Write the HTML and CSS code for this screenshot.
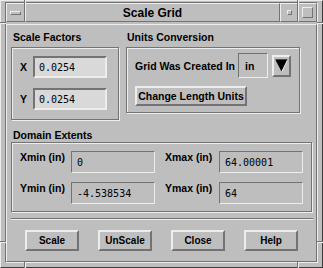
FILE: index.html
```html
<!DOCTYPE html>
<html lang="en">
<head>
    <meta charset="UTF-8" />
    <title>Scale Grid</title>
    <link rel="stylesheet" href="styles.css">
</head>
<body>
    <div class="frame">
        <span class="mark mark-v" style="left: 23px; top: -1px;"></span>
        <span class="mark mark-v" style="left: 296px; top: -1px;"></span>
        <span class="mark mark-v" style="left: 23px; top: 261px;"></span>
        <span class="mark mark-v" style="left: 296px; top: 261px;"></span>
        <span class="mark mark-h" style="left: -1px; top: 21px;"></span>
        <span class="mark mark-h" style="left: 316px; top: 21px;"></span>
        <span class="mark mark-h" style="left: -1px; top: 240px;"></span>
        <span class="mark mark-h" style="left: 316px; top: 240px;"></span>

        <div class="frame-inner">
            <div class="titlebar">
                <div class="tb-btn tb-menu"><span class="glyph-menu"></span></div>
                <div class="tb-title">Scale Grid</div>
                <div class="tb-btn tb-min"><span class="glyph-min"></span></div>
                <div class="tb-btn tb-max"><span class="glyph-max"></span></div>
            </div>

            <div class="client">
                <div class="top-row">
                    <div class="group scale-group">
                        <div class="group-label">Scale Factors</div>
                        <div class="group-box scale-box">
                            <div class="axis-row">
                                <span class="axis">X</span>
                                <div class="field field-edit">0.0254</div>
                            </div>
                            <div class="axis-row">
                                <span class="axis">Y</span>
                                <div class="field field-edit">0.0254</div>
                            </div>
                        </div>
                    </div>

                    <div class="group units-group">
                        <div class="group-label">Units Conversion</div>
                        <div class="group-box units-box">
                            <div class="units-row">
                                <span class="label">Grid Was Created In</span>
                                <div class="option-value">in</div>
                                <div class="arrow-btn">
                                    <svg width="13" height="13" viewBox="0 0 13 13">
                                        <polygon points="0.5,1 12.5,1 6.5,12.5" fill="#000" />
                                        <line x1="12.5" y1="1" x2="7" y2="12.5" stroke="#ededed" stroke-width="1" />
                                        <line x1="0.5" y1="0.5" x2="12.5" y2="0.5" stroke="#4a4a4a" stroke-width="1" />
                                    </svg>
                                </div>
                            </div>
                            <button class="btn btn-change">Change Length Units</button>
                        </div>
                    </div>
                </div>

                <div class="group-label domain-label">Domain Extents</div>
                <div class="group-box domain-box">
                    <span class="label">Xmin (in)</span>
                    <div class="field">0</div>
                    <span class="label label-right">Xmax (in)</span>
                    <div class="field">64.00001</div>
                    <span class="label">Ymin (in)</span>
                    <div class="field">-4.538534</div>
                    <span class="label label-right">Ymax (in)</span>
                    <div class="field">64</div>
                </div>

                <div class="separator"></div>

                <div class="action-row">
                    <button class="btn btn-action">Scale</button>
                    <button class="btn btn-action">UnScale</button>
                    <button class="btn btn-action">Close</button>
                    <button class="btn btn-action">Help</button>
                </div>
            </div>
        </div>
    </div>
</body>
</html>
```

FILE: styles.css
```css
* {
    box-sizing: border-box;
}

body {
    margin: 0;
    background: #bebebe;
    font-family: "Liberation Sans", Arial, sans-serif;
    color: #000;
}

.frame {
    position: relative;
    width: 323px;
    height: 268px;
    background: #bebebe;
    border: 1px solid;
    border-color: #ededed #3c3c3c #3c3c3c #ededed;
    padding: 1px 4px 4px 4px;
}

.frame-inner {
    height: 100%;
    border: 1px solid;
    border-color: #737373 #ededed #ededed #737373;
    display: flex;
    flex-direction: column;
}

/* window manager corner marks */
.mark {
    position: absolute;
    display: block;
}

.mark-v {
    width: 2px;
    height: 6px;
    border-left: 1px solid #737373;
    border-right: 1px solid #ededed;
}

.mark-h {
    width: 6px;
    height: 2px;
    border-top: 1px solid #737373;
    border-bottom: 1px solid #ededed;
}

.titlebar {
    height: 19px;
    display: flex;
}

.tb-btn,
.tb-title {
    border: 1px solid;
    border-color: #ededed #737373 #737373 #ededed;
    display: flex;
    align-items: center;
    justify-content: center;
}

.tb-menu {
    width: 19px;
}

.tb-min {
    width: 18px;
}

.tb-max {
    width: 19px;
}

.tb-title {
    flex: 1;
    font-size: 12px;
    font-weight: bold;
}

.glyph-menu {
    width: 11px;
    height: 4px;
    border: 1px solid;
    border-color: #ededed #737373 #737373 #ededed;
}

.glyph-min {
    width: 5px;
    height: 5px;
    border: 1px solid;
    border-color: #ededed #737373 #737373 #ededed;
}

.glyph-max {
    width: 11px;
    height: 11px;
    border: 1px solid;
    border-color: #ededed #737373 #737373 #ededed;
}

.client {
    flex: 1;
    margin-top: 2px;
    border: 1px solid;
    border-color: #ededed #737373 #737373 #ededed;
    padding: 6px 4px 0 4px;
}

.top-row {
    display: flex;
    gap: 7px;
    align-items: flex-start;
}

.group-label {
    font-size: 10.5px;
    font-weight: bold;
    line-height: 13px;
    height: 13px;
    padding-left: 2px;
    margin-bottom: 3px;
    white-space: nowrap;
}

.group-box {
    border: 1px solid #737373;
    box-shadow: inset 1px 1px 0 #ededed, 1px 1px 0 #ededed;
}

.scale-group {
    width: 108px;
}

.scale-box {
    height: 73px;
    padding: 8px 0 0 8px;
    display: flex;
    flex-direction: column;
    gap: 10px;
}

.axis-row {
    display: flex;
    align-items: center;
}

.axis {
    width: 13px;
    font-size: 10.5px;
    font-weight: bold;
}

.field {
    height: 22px;
    border: 1px solid;
    border-color: #737373 #ededed #ededed #737373;
    font-family: "DejaVu Sans Mono", monospace;
    font-size: 10px;
    padding-left: 5px;
    display: flex;
    align-items: center;
    white-space: nowrap;
}

.field-edit {
    width: 74px;
    border-width: 2px;
    padding-left: 4px;
    background: #d9d9d9;
}

.units-group {
    width: 174px;
}

.units-group .group-label {
    padding-left: 1px;
}

.units-box {
    height: 66px;
    padding: 5px 0 0 8px;
}

.units-row {
    display: flex;
    align-items: center;
    height: 25px;
}

.label {
    font-size: 10.5px;
    font-weight: bold;
    white-space: nowrap;
}

.option-value {
    width: 30px;
    height: 25px;
    margin-left: 3px;
    border: 1px solid;
    border-color: #737373 #ededed #ededed #737373;
    font-size: 10.5px;
    font-weight: bold;
    padding-left: 6px;
    display: flex;
    align-items: center;
}

.arrow-btn {
    width: 19px;
    height: 22px;
    margin-left: 4px;
    border: 2px solid;
    border-color: #ededed #737373 #737373 #ededed;
    display: flex;
    align-items: center;
    justify-content: center;
}

.btn {
    background: #bebebe;
    border: 2px solid;
    border-color: #ededed #737373 #737373 #ededed;
    font-family: "Liberation Sans", Arial, sans-serif;
    font-weight: bold;
    color: #000;
    padding: 0;
    white-space: nowrap;
}

.btn-change {
    display: block;
    width: 112px;
    height: 20px;
    margin-top: 8px;
    font-size: 10.5px;
}

.domain-label {
    margin-top: 9px;
    margin-bottom: 0;
}

.domain-box {
    height: 70px;
    padding: 8px 0 0 8px;
    display: grid;
    grid-template-columns: 51px 84px 64px 84px;
    grid-auto-rows: 22px;
    row-gap: 9px;
}

.domain-box .label {
    line-height: 13px;
}

.label-right {
    padding-left: 10px;
}

.separator {
    margin-top: 6px;
    margin-right: -1px;
    height: 2px;
    border-top: 1px solid #737373;
    border-bottom: 1px solid #ededed;
}

.action-row {
    margin-top: 10px;
    padding-left: 14px;
    display: flex;
    gap: 19px;
}

.btn-action {
    width: 54px;
    height: 21px;
    font-size: 10px;
}
```
